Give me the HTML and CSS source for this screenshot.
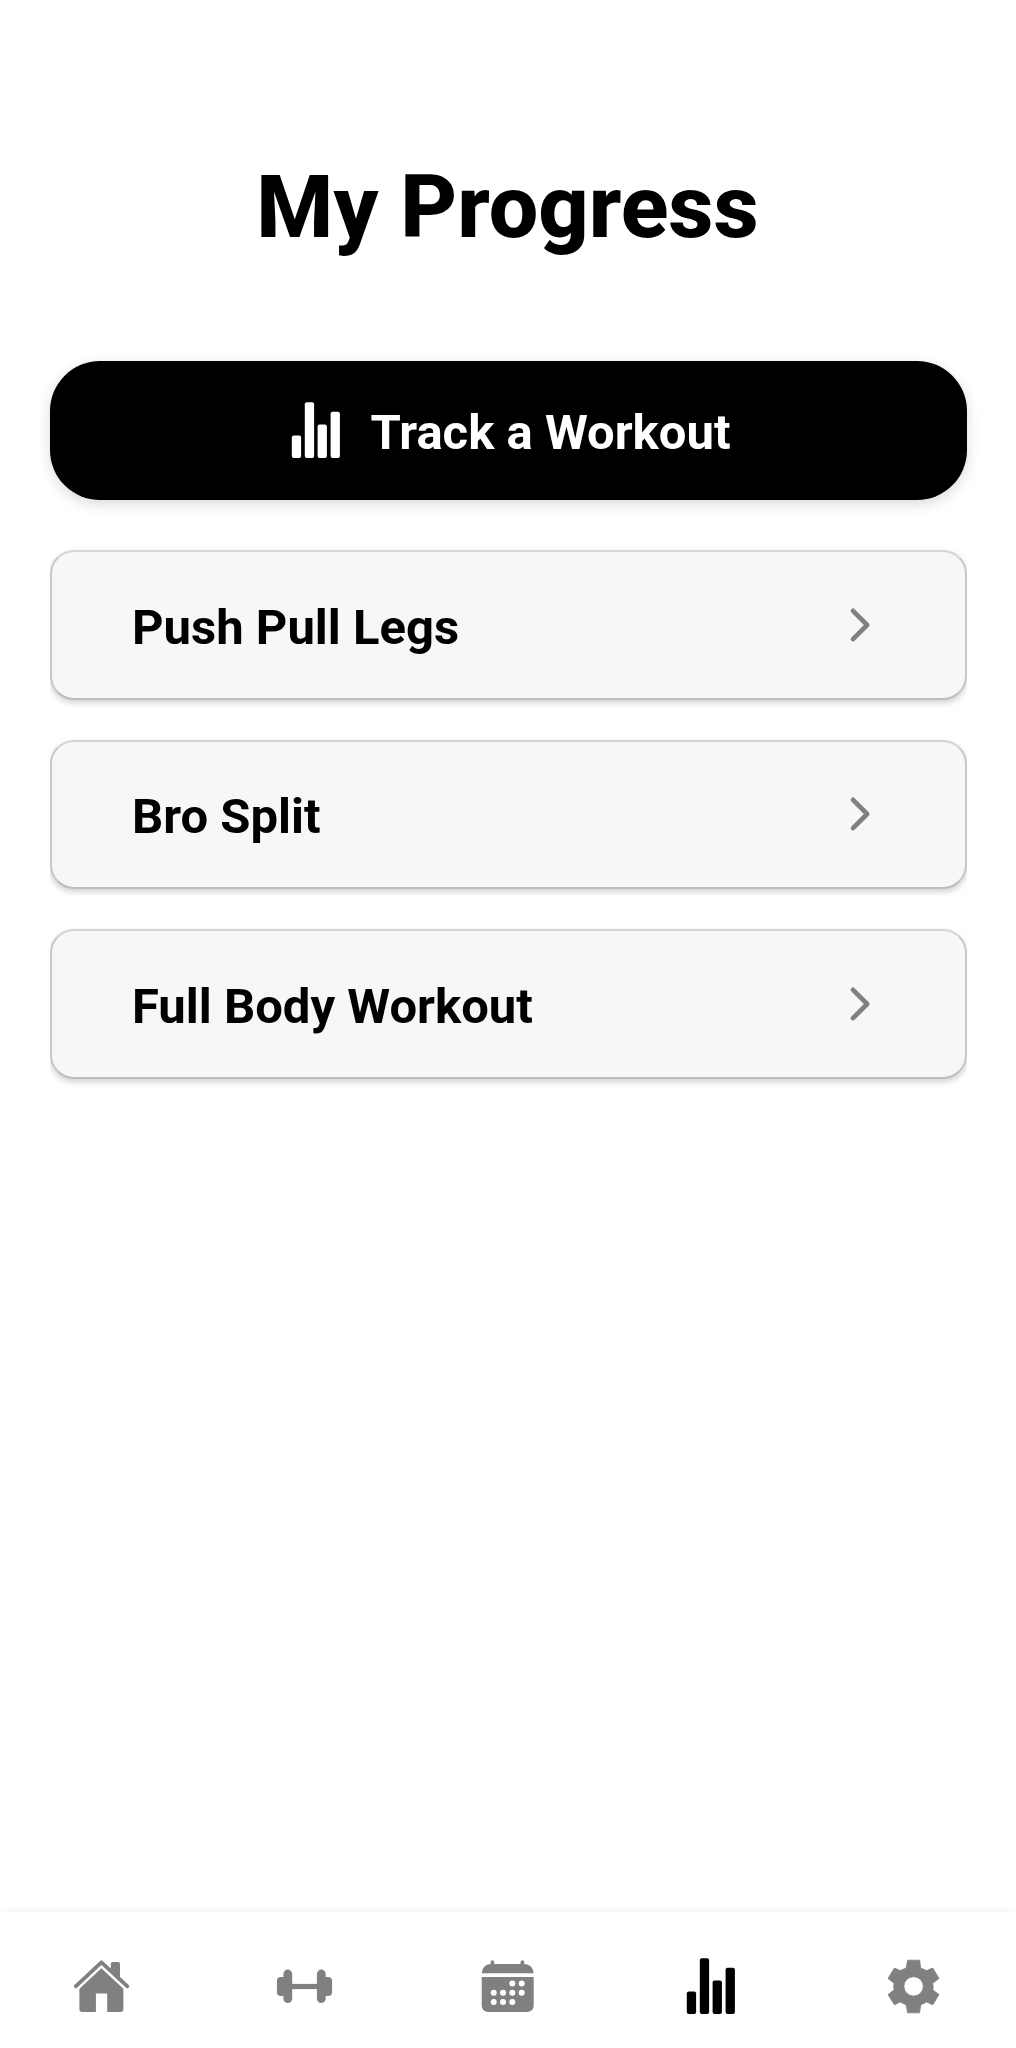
FILE: index.html
```html
<!DOCTYPE html>
<html lang="en">
<head>
<meta charset="utf-8">
<title>My Progress</title>
<link rel="stylesheet" href="styles.css">
</head>
<body>
<svg class="defs" width="0" height="0" aria-hidden="true">
  <symbol id="bars" viewBox="0 0 64 64">
    <rect x="7.8" y="37.6" width="9.3" height="22.4" rx="2"/>
    <rect x="20.8" y="4.2" width="9.3" height="55.8" rx="2"/>
    <rect x="33.6" y="26.6" width="9.3" height="33.4" rx="2"/>
    <rect x="46.6" y="13.7" width="9.3" height="46.3" rx="2"/>
  </symbol>
  <symbol id="chevron" viewBox="0 0 36 36">
    <path d="M11 3.8 25.2 18 11 32.2" fill="none" stroke="currentColor" stroke-width="4.6" stroke-linecap="round" stroke-linejoin="round"/>
  </symbol>
</svg>
<div class="app">
  <main class="content">
    <h1 class="title">My Progress</h1>
    <button class="track"><svg class="icon"><use href="#bars"/></svg><span>Track a Workout</span></button>
    <div class="list">
      <a class="card"><span>Push Pull Legs</span><svg class="chevron"><use href="#chevron"/></svg></a>
      <a class="card"><span>Bro Split</span><svg class="chevron"><use href="#chevron"/></svg></a>
      <a class="card"><span>Full Body Workout</span><svg class="chevron"><use href="#chevron"/></svg></a>
    </div>
  </main>
  <nav class="tabs">
    <a class="tab"><svg class="icon" viewBox="0 0 64 64">
      <path d="M5.7 32.3 31.4 8.3 57.4 32.3" fill="none" stroke="currentColor" stroke-width="3.8" stroke-linecap="round" stroke-linejoin="round"/>
      <path d="M40.8 16V10q0-1.9 1.9-1.9h5.4q1.9 0 1.9 1.9v15Z"/>
      <path d="M31.4 14.2 53.4 34.7V55q0 3-3 3H37.2V39.6H25.9V58H12.4q-3 0-3-3V34.7Z"/>
    </svg></a>
    <a class="tab"><svg class="icon" viewBox="0 0 64 64">
      <rect x="16" y="29.9" width="31" height="5.2"/>
      <rect x="10.4" y="15.6" width="8.8" height="33.4" rx="4.4"/>
      <rect x="43.9" y="15.6" width="8.8" height="33.4" rx="4.4"/>
      <path d="M11.5 23H8q-4.1 0-4.1 4.1V38q0 4.1 4.1 4.1h3.5ZM51.5 23H55q4.1 0 4.1 4.1V38q0 4.1-4.1 4.1h-3.5Z"/>
    </svg></a>
    <a class="tab"><svg class="icon" viewBox="0 0 64 64">
      <path d="M5.7 19.2Q6.5 10 16 10h31.4q9.5 0 10.3 9.2ZM5.7 23h52v28q0 7-7 7h-38q-7 0-7-7Z"/>
      <path d="M16.4 8v4M46.4 8v4" stroke="currentColor" stroke-width="3.6" stroke-linecap="round"/>
      <g class="dots">
        <circle cx="36.3" cy="29.4" r="3"/><circle cx="45.7" cy="29.4" r="3"/>
        <circle cx="17.7" cy="38.7" r="3"/><circle cx="27" cy="38.7" r="3"/><circle cx="36.3" cy="38.7" r="3"/><circle cx="45.7" cy="38.7" r="3"/>
        <circle cx="17.7" cy="48" r="3"/><circle cx="27" cy="48" r="3"/><circle cx="36.3" cy="48" r="3"/>
      </g>
    </svg></a>
    <a class="tab active"><svg class="icon"><use href="#bars"/></svg></a>
    <a class="tab"><svg class="icon" viewBox="0 0 64 64">
      <path fill-rule="evenodd" stroke="currentColor" stroke-width=".8" stroke-linejoin="round" d="M25.6 6.2H37.6L38.7 13.9 44.6 16.6 50.8 14 57 24.5 50.7 29.2Q51.5 32.5 50.9 36L57 40.6 50.8 50.8 44.6 48 38.7 51 37.6 58.8H25.6L24.2 51 18.3 48 12.4 50.8 6 40.6 12 36Q11.5 32.5 12 29.2L6 24.5 12.4 14 18.3 16.6 24.2 13.9ZM31.6 22.7a9.7 9.7 0 1 0 0 19.4a9.7 9.7 0 1 0 0-19.4Z"/>
    </svg></a>
  </nav>
</div>
</body>
</html>
```
FILE: styles.css
```css
* { box-sizing: border-box; }
body { margin: 0; background: #fff; color: #000; font-family: Roboto, "Liberation Sans", sans-serif; }
svg { display: block; fill: currentColor; }
.defs { position: absolute; }
.app { display: flex; flex-direction: column; height: 2048px; }
.content { flex: 1; padding: 155px 49px 0 50px; }
.title { margin: 0 2px 0 0; font-size: 88px; font-weight: 820; line-height: 104px; text-align: center; }
.track {
  display: flex; align-items: center; justify-content: center; gap: 23px;
  width: 100%; height: 139px; margin: 102px 0 0; padding: 0 3px 0 0; border: 0; border-radius: 50px;
  background: #000; color: #fff; font: 700 49px/58px Roboto, "Liberation Sans", sans-serif;
  box-shadow: 0 4px 14px rgba(0, 0, 0, .15);
}
.track .icon { margin-bottom: 2px; }
.track span { padding-top: 4px; }
.icon { width: 64px; height: 64px; flex: none; }
.list { display: flex; flex-direction: column; gap: 40px; margin-top: 40px; padding: 10px 0; overflow: hidden; }
.card {
  display: flex; align-items: center; justify-content: space-between; height: 149.6px;
  padding: 5px 87px 0 80px; border: 2px solid #c8c8c8; border-top-color: #d6d6d6; border-bottom-color: #bdbdbd; border-radius: 24px;
  background: #f7f7f7; font-size: 49px; font-weight: 700; line-height: 58px;
  box-shadow: 0 3px 6px rgba(0, 0, 0, .18);
}
.card span { margin-top: 1px; }
.chevron { width: 36px; height: 36px; color: #808080; margin-bottom: 5px; }
.tabs {
  display: grid; grid-template-columns: repeat(5, 1fr); align-items: center;
  height: 136px; padding-top: 12px; color: #808080; box-shadow: 0 -1px 6px rgba(0, 0, 0, .06);
}
.tab { display: flex; justify-content: center; }
.active { color: #000; }
.dots { fill: #fff; }
```
